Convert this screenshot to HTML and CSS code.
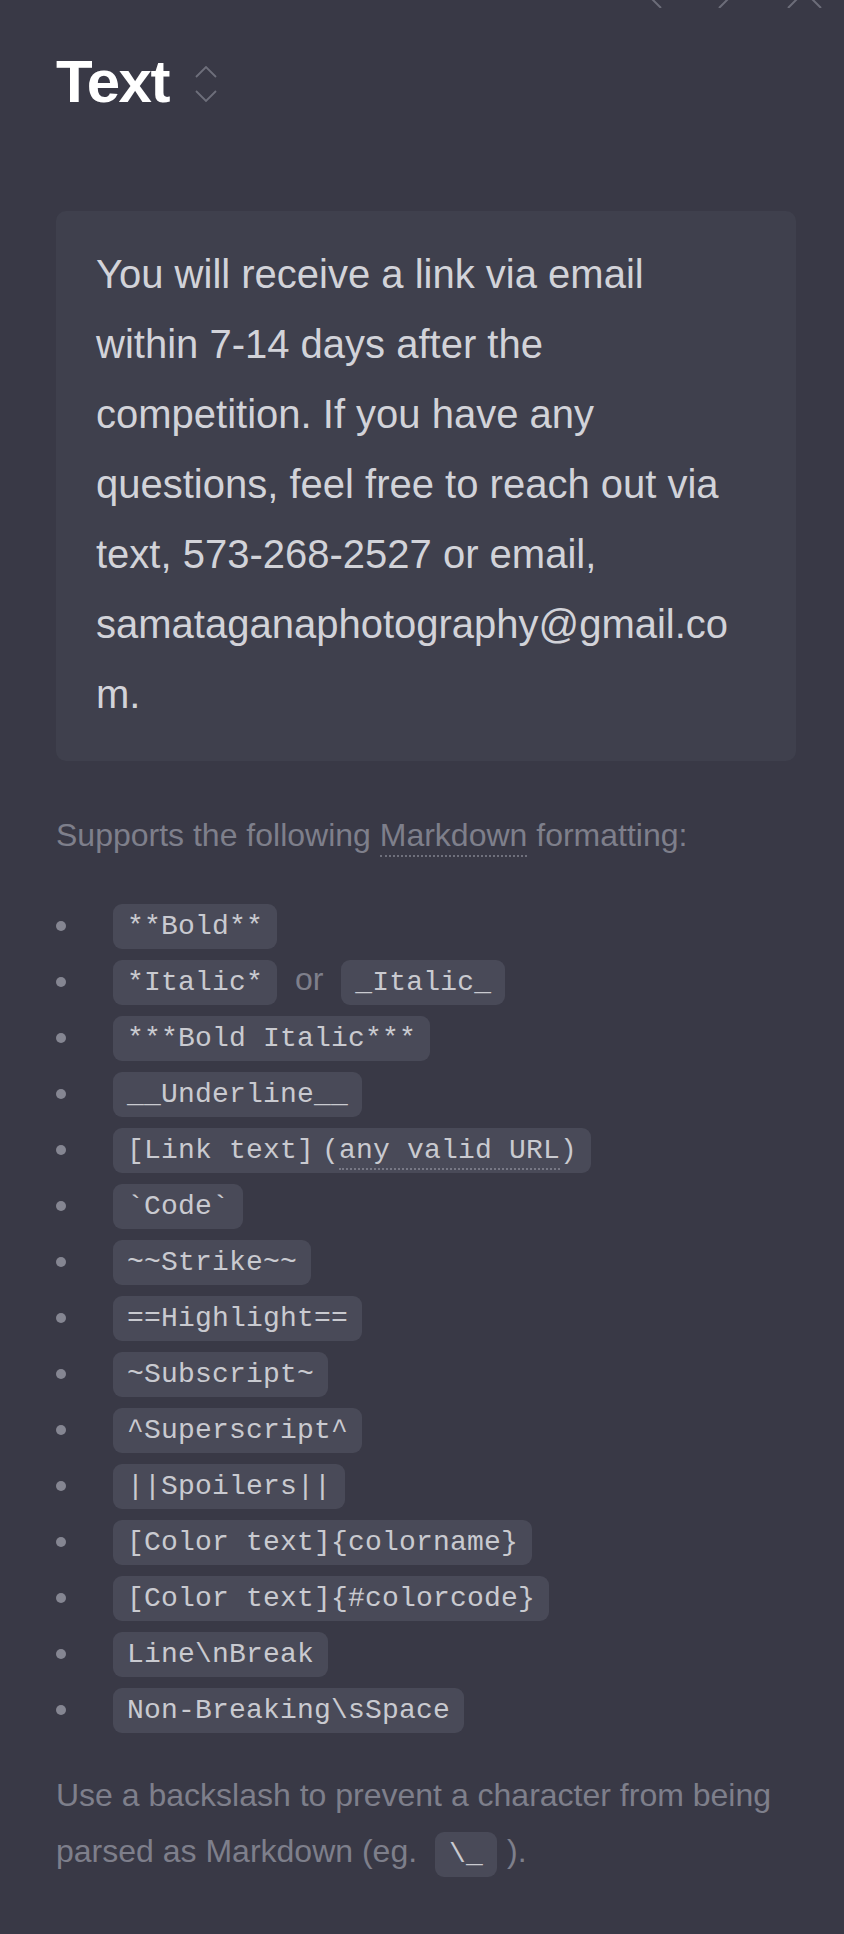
FILE: index.html
```html
<!DOCTYPE html>
<html lang="en">
<head>
<meta charset="utf-8">
<title>Text</title>
<link rel="stylesheet" href="styles.css">
</head>
<body>
<div class="topbar">
  <svg class="topicons" width="844" height="8" viewBox="0 0 844 8" aria-hidden="true">
    <polyline points="661,-25 644.5,-8.5 661,8" />
    <polyline points="719,-25 735.5,-8.5 719,8" />
    <line x1="788" y1="8" x2="821" y2="-25" />
    <line x1="788" y1="-25" x2="821" y2="8" />
  </svg>
</div>
<main class="page">
  <div class="title-row">
    <h1 class="title">Text</h1>
    <svg class="sort" width="22" height="38" viewBox="0 0 22 38" aria-hidden="true">
      <polyline points="1,11 11,1 21,11" />
      <polyline points="1,25 11,35 21,25" />
    </svg>
  </div>

  <div class="card">
    <p class="card-text">You will receive a link via email within 7-14 days after the competition. If you have any questions, feel free to reach out via text, 573-268-2527 or email, samataganaphotography@gmail.com.</p>
  </div>

  <p class="help help-intro">Supports the following <span class="dotted">Markdown</span> formatting:</p>

  <ul class="fmt">
    <li><code class="pill">**Bold**</code></li>
    <li><code class="pill">*Italic*</code> <span class="or">or</span> <code class="pill">_Italic_</code></li>
    <li><code class="pill">***Bold Italic***</code></li>
    <li><code class="pill">__Underline__</code></li>
    <li><code class="pill">[Link text]<span class="paren">(<span class="link">any valid URL</span>)</span></code></li>
    <li><code class="pill">`Code`</code></li>
    <li><code class="pill">~~Strike~~</code></li>
    <li><code class="pill">==Highlight==</code></li>
    <li><code class="pill">~Subscript~</code></li>
    <li><code class="pill">^Superscript^</code></li>
    <li><code class="pill">||Spoilers||</code></li>
    <li><code class="pill">[Color&nbsp;text]{colorname}</code></li>
    <li><code class="pill">[Color&nbsp;text]{#colorcode}</code></li>
    <li><code class="pill">Line\nBreak</code></li>
    <li><code class="pill">Non-Breaking\sSpace</code></li>
  </ul>

  <p class="help help-outro">Use a backslash to prevent a character from being parsed as Markdown (eg. <code class="pill inl">\_</code>).</p>
</main>
</body>
</html>
```

FILE: styles.css
```css
html {
  background: #393946;
}

body {
  margin: 0;
  background: #393946;
  font-family: "Liberation Sans", Arial, Helvetica, sans-serif;
  color: #d4d4da;
}

.topbar {
  height: 8px;
  overflow: hidden;
}

.topicons {
  display: block;
}

.topicons polyline,
.topicons line {
  fill: none;
  stroke: #6c6d79;
  stroke-width: 2;
}

.page {
  padding: 0 48px 40px 56px;
}

.title-row {
  display: flex;
  align-items: flex-start;
  margin-top: 39px;
}

.title {
  margin: 0;
  font-size: 60px;
  line-height: 70px;
  font-weight: 700;
  letter-spacing: -1.5px;
  color: #ffffff;
}

.sort {
  display: block;
  margin-top: 19px;
  margin-left: 26px;
}

.sort polyline {
  fill: none;
  stroke: #6e6f7b;
  stroke-width: 1.8;
}

.card {
  margin-top: 94px;
  background: #3f404d;
  border-radius: 10px;
  padding: 28px 40px 32px 40px;
}

.card-text {
  margin: 0;
  font-size: 40px;
  line-height: 70px;
  color: #d2d3d9;
  overflow-wrap: break-word;
}

.help {
  margin: 0;
  font-size: 32px;
  line-height: 56px;
  color: #7e7f8b;
}

.help-intro {
  margin-top: 46px;
}

.help-outro {
  margin-top: 32px;
}

.dotted {
  border-bottom: 2px dotted #6f707c;
  padding-bottom: 2px;
}

.fmt {
  list-style: none;
  margin: 32px 0 0 0;
  padding: 0;
  font-size: 32px;
  line-height: 56px;
  color: #7e7f8b;
}

.fmt li::before {
  content: "";
  display: inline-block;
  width: 10px;
  height: 10px;
  border-radius: 50%;
  background: #858692;
  vertical-align: middle;
  margin-right: 47px;
}

.pill {
  display: inline-block;
  font-family: "Liberation Mono", "Courier New", monospace;
  font-size: 28px;
  line-height: 45px;
  padding: 0 14px;
  border-radius: 9px;
  background: #494a58;
  color: #c9cad0;
  white-space: nowrap;
  letter-spacing: 0.2px;
}

.or {
  margin: 0 9px;
}

.paren {
  margin-left: 8px;
}

.link {
  border-bottom: 2px dotted #777885;
  padding-bottom: 2px;
}

.inl {
  margin-left: 9px;
  margin-right: 10px;
}
```
